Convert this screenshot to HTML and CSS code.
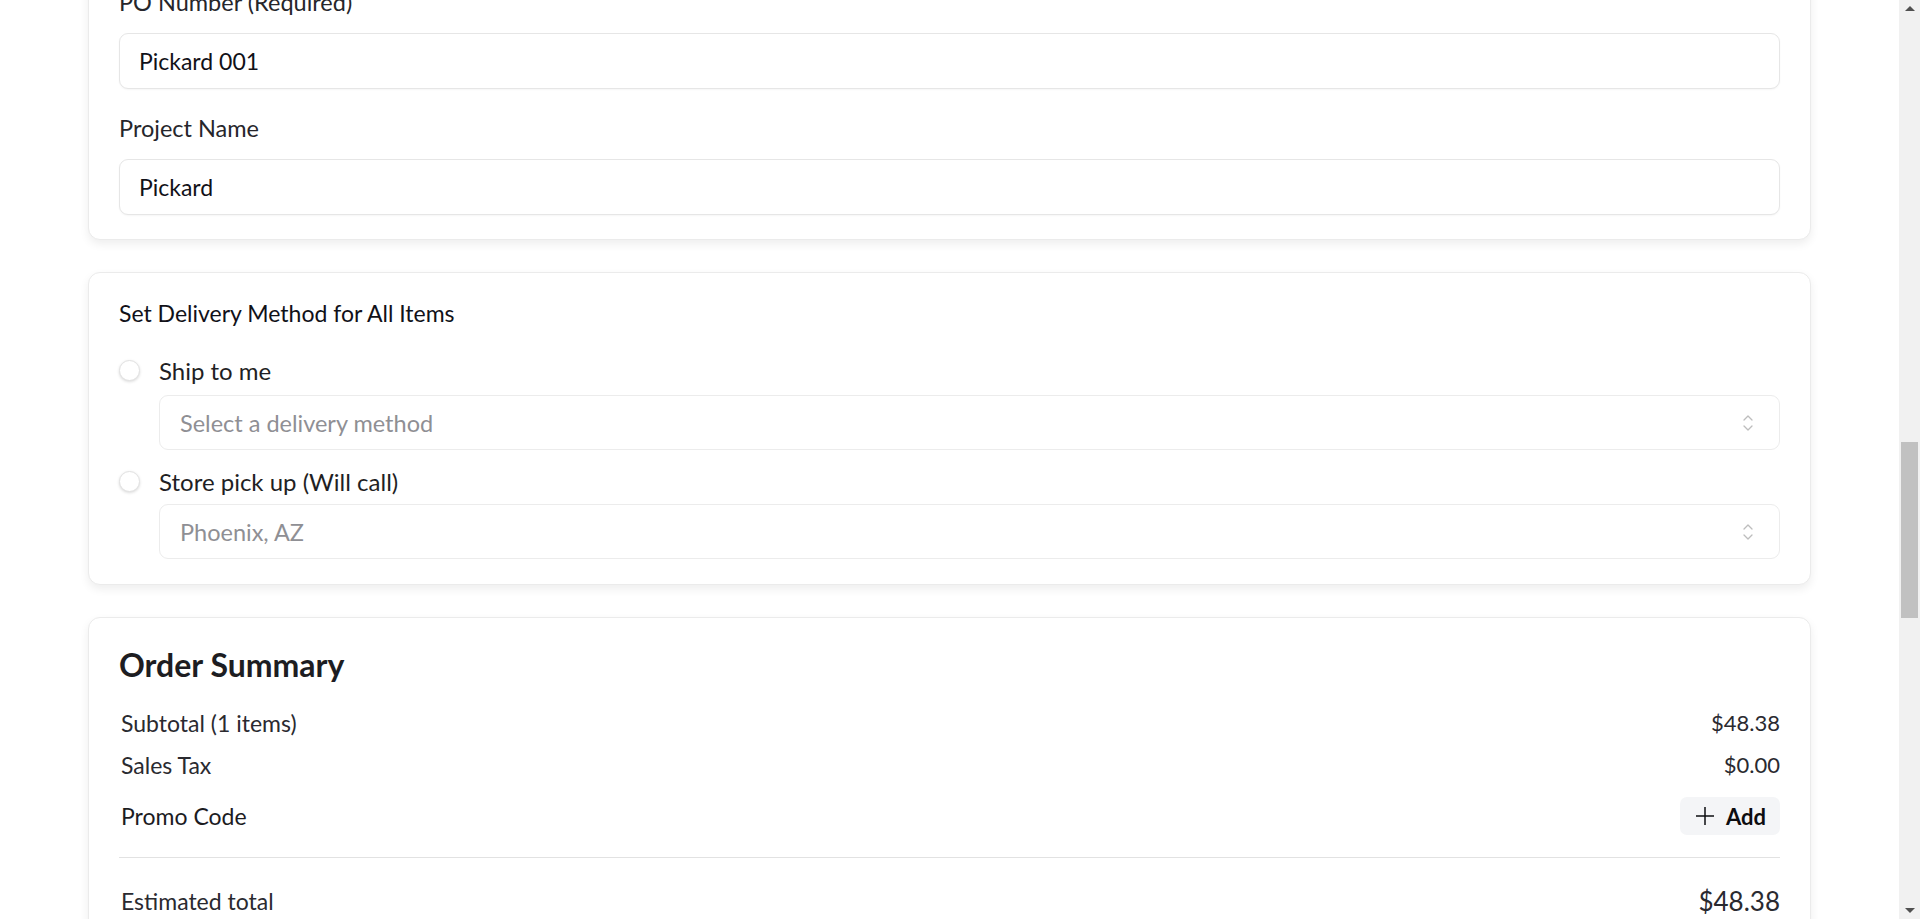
FILE: index.html
```html
<!DOCTYPE html>
<html lang="en">
<head>
  <meta charset="UTF-8">
  <meta name="viewport" content="width=device-width, initial-scale=1.0">
  <title>Checkout</title>
  <link rel="stylesheet" href="styles.css">
</head>
<body>
  <main class="checkout">
    <section class="card card-po">
      <div class="field">
        <label class="field-label" for="poNumber">PO Number (Required)</label>
        <input class="text-input" id="poNumber" type="text" value="Pickard 001">
      </div>
      <div class="field">
        <label class="field-label" for="projectName">Project Name</label>
        <input class="text-input" id="projectName" type="text" value="Pickard">
      </div>
    </section>

    <section class="card delivery">
      <p class="card-title">Set Delivery Method for All Items</p>

      <label class="radio-row">
        <span class="radio"></span>
        Ship to me
      </label>
      <div class="select select-ship">
        <span>Select a delivery method</span>
        <svg class="chevrons" width="12" height="18" viewBox="0 0 12 18" fill="none" stroke="currentColor" stroke-width="1.3" stroke-linecap="round" stroke-linejoin="round">
          <polyline points="2 6 6 2 10 6"></polyline>
          <polyline points="2 12 6 16 10 12"></polyline>
        </svg>
      </div>

      <label class="radio-row radio-row-store">
        <span class="radio"></span>
        Store pick up (Will call)
      </label>
      <div class="select select-store">
        <span>Phoenix, AZ</span>
        <svg class="chevrons" width="12" height="18" viewBox="0 0 12 18" fill="none" stroke="currentColor" stroke-width="1.3" stroke-linecap="round" stroke-linejoin="round">
          <polyline points="2 6 6 2 10 6"></polyline>
          <polyline points="2 12 6 16 10 12"></polyline>
        </svg>
      </div>
    </section>

    <section class="card summary">
      <h2>Order Summary</h2>
      <div class="summary-line first">
        <span>Subtotal (1 items)</span>
        <span class="amount">$48.38</span>
      </div>
      <div class="summary-line tax">
        <span>Sales Tax</span>
        <span class="amount">$0.00</span>
      </div>
      <div class="summary-line promo">
        <span>Promo Code</span>
        <button class="add-button" type="button">
          <svg width="20" height="20" viewBox="0 0 20 20" fill="none" stroke="currentColor" stroke-width="1.5">
            <line x1="10" y1="1" x2="10" y2="19"></line>
            <line x1="1" y1="10" x2="19" y2="10"></line>
          </svg>
          Add
        </button>
      </div>
      <hr class="divider">
      <div class="summary-line total">
        <span>Estimated total</span>
        <span class="amount">$48.38</span>
      </div>
    </section>
  </main>

  <!-- page scrollbar, as the window shows it -->
  <div class="scrollbar">
    <span class="arrow arrow-up"></span>
    <div class="track"><div class="thumb"></div></div>
    <span class="arrow arrow-down"></span>
  </div>
</body>
</html>
```

FILE: styles.css
```css
body {
  margin: 0 21px 0 0;
  font-family: Lato, "Noto Sans", sans-serif;
  color: #1c1c1f;
  background-color: #fff;
  overflow: hidden;
}
.checkout {
  height: 100vh;
  overflow: hidden;
  box-sizing: border-box;
  padding: 0 88px;
  display: flex;
  flex-direction: column;
  gap: 32px;
}
.card {
  flex-shrink: 0;
  background-color: #fff;
  border: 1px solid #ebebeb;
  border-radius: 12px;
  box-shadow: 0 4px 10px rgba(0, 0, 0, 0.07);
  padding: 26px 30px 24px;
}
.card-po {
  margin-top: -39px;
  display: flex;
  flex-direction: column;
  gap: 25px;
}
.field {
  display: flex;
  flex-direction: column;
}
.field-label {
  font-size: 23.5px;
  line-height: 28px;
  color: #26262b;
  margin-bottom: 17px;
}
.text-input {
  height: 56px;
  box-sizing: border-box;
  border: 1px solid #e6e6e6;
  border-radius: 9px;
  padding: 0 19px;
  font-family: inherit;
  font-size: 23px;
  color: #111118;
  background-color: #fff;
  box-shadow: 0 1px 2px rgba(0, 0, 0, 0.04);
  outline: none;
}

/* delivery */
.delivery {
  padding-bottom: 25px;
}
.card-title {
  margin: 0;
  font-size: 23px;
  line-height: 28px;
  color: #111118;
}
.radio-row {
  display: flex;
  align-items: center;
  gap: 19px;
  height: 28px;
  margin-top: 29px;
  font-size: 24px;
  color: #1f1f24;
  cursor: pointer;
}
.radio-row-store {
  margin-top: 17px;
}
.radio {
  width: 21px;
  height: 21px;
  box-sizing: border-box;
  border-radius: 50%;
  border: 1px solid #e2e2e2;
  background-color: #fff;
  box-shadow: 0 1px 3px rgba(0, 0, 0, 0.15);
}
.select {
  margin-left: 40px;
  height: 55px;
  box-sizing: border-box;
  border: 1px solid #ececec;
  border-radius: 9px;
  padding: 0 25px 0 20px;
  display: flex;
  align-items: center;
  justify-content: space-between;
  font-size: 23.5px;
  color: #8f8f94;
}
.select-ship {
  margin-top: 11px;
}
.select-store {
  margin-top: 9px;
}
.chevrons {
  color: #bdbdbd;
}

/* summary */
.summary h2 {
  margin: 3px 0 0;
  font-size: 32px;
  line-height: 36px;
  font-weight: 700;
  color: #1d1d22;
}
.summary-line {
  display: flex;
  align-items: center;
  justify-content: space-between;
  font-size: 23px;
  line-height: 28px;
  color: #2a2a30;
  padding-left: 2px;
}
.summary-line.first {
  margin-top: 26px;
}
.summary-line.tax {
  margin-top: 14px;
}
.summary-line.promo {
  margin-top: 18px;
  height: 38px;
  color: #1c1c1f;
}
.amount {
  font-size: 22px;
}
.add-button {
  display: flex;
  align-items: center;
  gap: 11px;
  height: 38px;
  padding: 0 14px 0 15px;
  border: none;
  border-radius: 7px;
  background-color: #f4f5f7;
  font-family: inherit;
  font-size: 22px;
  font-weight: 700;
  color: #0d0d10;
  cursor: pointer;
}
.divider {
  margin: 22px 0 0;
  border: none;
  border-top: 1px solid #e2e2e2;
}
.summary-line.total {
  margin-top: 27px;
  height: 32px;
}
.total .amount {
  font-size: 26px;
}

/* window scrollbar */
.scrollbar {
  position: fixed;
  top: 0;
  right: 0;
  width: 21px;
  height: 100vh;
  background-color: #f1f1f1;
  display: flex;
  flex-direction: column;
}
.track {
  flex: 1;
  padding: 0 2px 0 2px;
}
.thumb {
  margin-top: 425px;
  height: 176px;
  background-color: #c1c1c1;
}
.arrow {
  height: 17px;
  display: flex;
  align-items: center;
  justify-content: center;
}
.arrow::before {
  content: "";
  border-left: 5px solid transparent;
  border-right: 5px solid transparent;
}
.arrow-up::before {
  border-bottom: 5px solid #505050;
}
.arrow-down::before {
  border-top: 5px solid #505050;
}
```
